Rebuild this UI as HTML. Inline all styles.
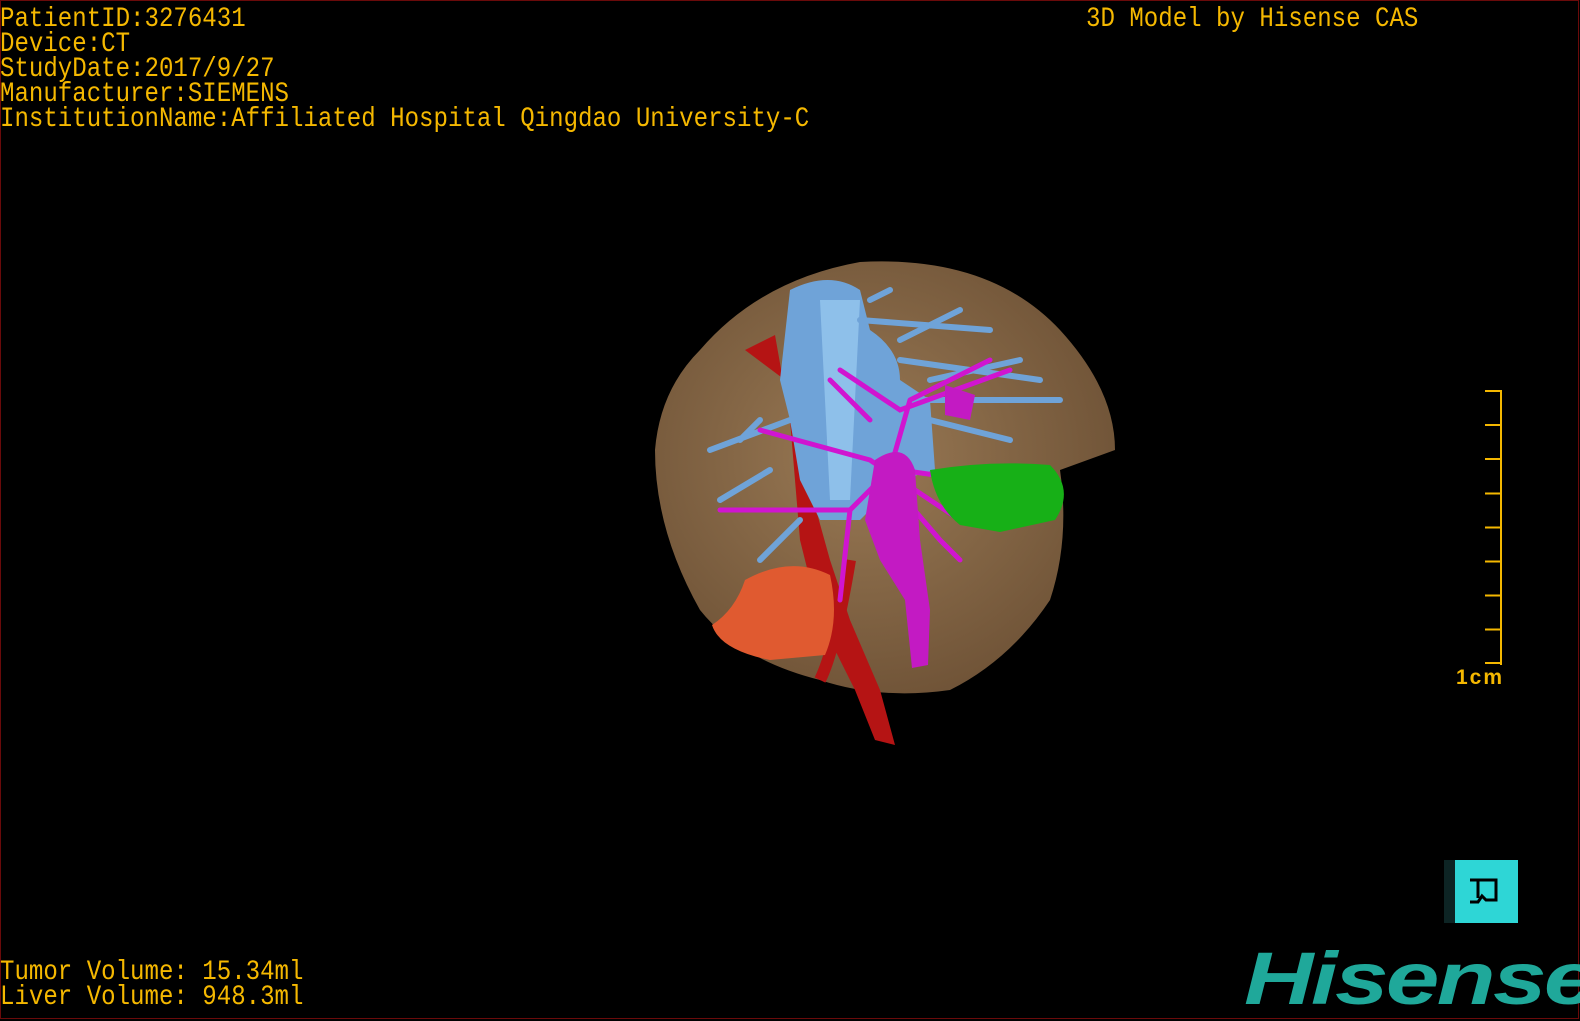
<!DOCTYPE html>
<html><head><meta charset="utf-8"><style>
html,body{margin:0;padding:0;background:#000;width:1580px;height:1020px;overflow:hidden}
.t{position:absolute;color:#f5b800;font-family:"Liberation Mono",monospace;font-size:28px;line-height:25px;white-space:pre;transform-origin:0 0;transform:scaleX(0.86)}
</style></head><body>
<div style="position:absolute;left:0;top:0;width:1577px;height:1017px;border:1px solid #6a0a0a;"></div>
<div class="t" style="left:0px;top:7px">PatientID:3276431
Device:CT
StudyDate:2017/9/27
Manufacturer:SIEMENS
InstitutionName:Affiliated Hospital Qingdao University-C</div>
<div class="t" style="left:1086px;top:7px">3D Model by Hisense CAS</div>
<div class="t" style="left:0px;top:960px">Tumor Volume: 15.34ml
Liver Volume: 948.3ml</div>
<svg width="1580" height="1020" style="position:absolute;left:0;top:0">
<defs>
<radialGradient id="lv" cx="0.45" cy="0.45" r="0.6"><stop offset="0" stop-color="#9a7a55"/><stop offset="1" stop-color="#6e5236"/></radialGradient>
</defs>
<path d="M700 350 Q760 280 860 262 Q990 255 1060 330 Q1115 390 1115 450 L1060 470 Q1070 540 1050 600 Q1010 660 950 690 Q880 700 820 680 Q740 660 700 610 Q655 530 655 450 Q660 390 700 350Z" fill="url(#lv)"/>
<path d="M745 350 L775 335 L790 420 L800 540 L820 620 L855 690 L875 740 L895 745 L880 690 L850 620 L830 560 L805 470 L785 380Z" fill="#b51414"/>
<path d="M850 560 Q835 650 820 680" stroke="#b51414" stroke-width="12" fill="none"/>
<path d="M790 290 Q830 270 860 290 L870 330 Q900 350 900 380 L930 400 L935 470 L900 480 L860 520 L820 520 L800 480 L790 420 L780 380 Z" fill="#6fa3d8"/>
<path d="M820 300 L860 300 L850 500 L830 500Z" fill="#8ec0ea"/>
<g stroke="#6fa3d8" stroke-width="6" fill="none" stroke-linecap="round">
<path d="M860 320 L990 330 M900 360 L1040 380 M920 400 L1060 400 M930 420 L1010 440 M790 420 L710 450 M770 470 L720 500 M800 520 L760 560 M870 300 L890 290 M900 340 L960 310 M930 380 L1020 360 M760 420 L740 440"/>
</g>
<g stroke="#d015d0" stroke-width="5" fill="none" stroke-linecap="round">
<path d="M720 510 L850 510 L890 470 L910 400 M760 430 L870 460 L960 520 M840 370 L900 410 L1010 370 M880 470 L940 540 L960 560 M850 510 L840 600 M900 470 L970 480 L1020 500 M870 420 L830 380 M910 400 L990 360"/>
</g>
<path d="M875 460 Q905 440 915 470 L920 540 L930 610 L928 665 L912 668 L905 600 L880 560 L865 520Z" fill="#c31ac3"/>
<path d="M945 385 L975 395 L970 420 L945 415Z" fill="#c31ac3"/>
<path d="M930 470 Q990 460 1050 465 Q1075 490 1055 520 L1000 532 L960 525 Q935 505 930 470Z" fill="#17b017"/>
<path d="M745 580 Q790 555 830 575 Q840 620 825 655 L770 660 Q720 650 712 625 Q735 610 745 580Z" fill="#e05a30"/>
</svg>
<div style="position:absolute;left:1500px;top:390px;width:2px;height:275px;background:#f5b800"></div>
<div style="position:absolute;left:1485px;top:390px;width:16px;height:274px;background:repeating-linear-gradient(#f5b800 0 2px,transparent 2px 34.1px)"></div>
<div style="position:absolute;left:1485px;top:662px;width:16px;height:2px;background:#f5b800"></div>
<div style="position:absolute;left:1456px;top:666px;color:#f5b800;font:bold 21px 'Liberation Sans',sans-serif;letter-spacing:2px">1cm</div>
<div style="position:absolute;left:1444px;top:860px;width:11px;height:63px;background:#0d2424"></div>
<div style="position:absolute;left:1455px;top:860px;width:63px;height:63px;background:#2ed6d6"></div>
<svg width="40" height="34" style="position:absolute;left:1468px;top:876px"><path d="M2 4 H28 V24 H18 L14 20 L10 26 H2 M10 4 V22" stroke="#000" stroke-width="3" fill="none"/></svg>
<div style="position:absolute;left:1244px;top:936px;color:#1fa89a;font:italic bold 74px 'Liberation Sans',sans-serif;letter-spacing:-2px;transform:scaleX(1.3);transform-origin:0 0">Hisense</div>
</body></html>
